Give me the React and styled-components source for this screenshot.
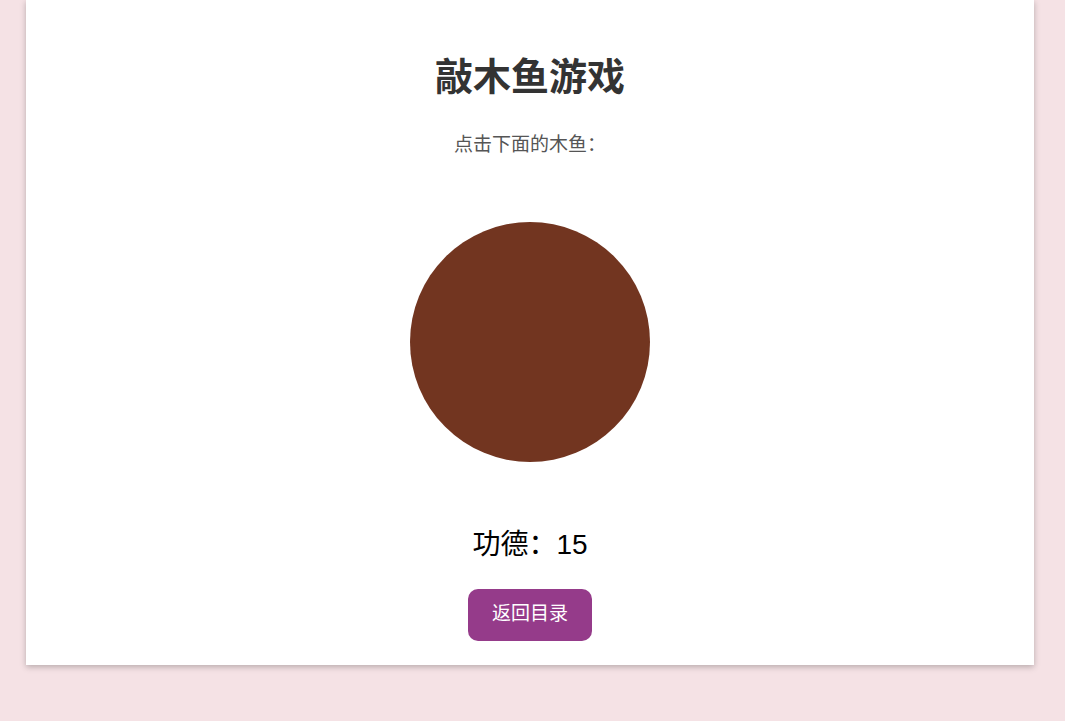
import React, { useState } from "react";
import styled, { createGlobalStyle } from "styled-components";

const GlobalStyle = createGlobalStyle`
  html, body {
    margin: 0;
    padding: 0;
    background: #f5e2e5;
    font-family: "Liberation Sans", "Noto Sans CJK SC", sans-serif;
  }
`;

const Page = styled.div`
  padding: 0 31px 56px 26px;
`;

// 卡片
const Card = styled.div`
  background: #ffffff;
  box-shadow: 0 2px 6px rgba(0, 0, 0, 0.25);
  padding: 55px 20px 24px;
  display: flex;
  flex-direction: column;
  align-items: center;
  text-align: center;
`;

const Title = styled.h1`
  margin: 0;
  font-size: 38px;
  line-height: 45px;
  font-weight: 700;
  color: #333333;
`;

const Hint = styled.p`
  margin: 33px 0 0;
  font-size: 19px;
  line-height: 24px;
  color: #555555;
`;

// 木鱼
const Fish = styled.div`
  margin-top: 65px;
  width: 240px;
  height: 240px;
  border-radius: 50%;
  background: #723520;
  cursor: pointer;
  transition: transform 0.1s;
  &:active {
    transform: scale(0.95);
  }
`;

const Score = styled.div`
  margin-top: 66px;
  font-size: 28px;
  line-height: 34px;
  color: #000000;
`;

const BackBtn = styled.button`
  margin-top: 27px;
  height: 52px;
  padding: 0 24px 3px;
  border: none;
  border-radius: 10px;
  background: #953b8a;
  color: #ffffff;
  font-family: "Liberation Sans", "Noto Sans CJK SC", sans-serif;
  font-size: 19px;
  line-height: 24px;
  cursor: pointer;
`;

const App = () => {
  const [merit, setMerit] = useState(15);

  return (
    <>
      <GlobalStyle />
      <Page>
        <Card>
          <Title>敲木鱼游戏</Title>
          <Hint>点击下面的木鱼：</Hint>
          <Fish onClick={() => setMerit(merit + 1)} />
          <Score>功德：{merit}</Score>
          <BackBtn>返回目录</BackBtn>
        </Card>
      </Page>
    </>
  );
};

export default App;
